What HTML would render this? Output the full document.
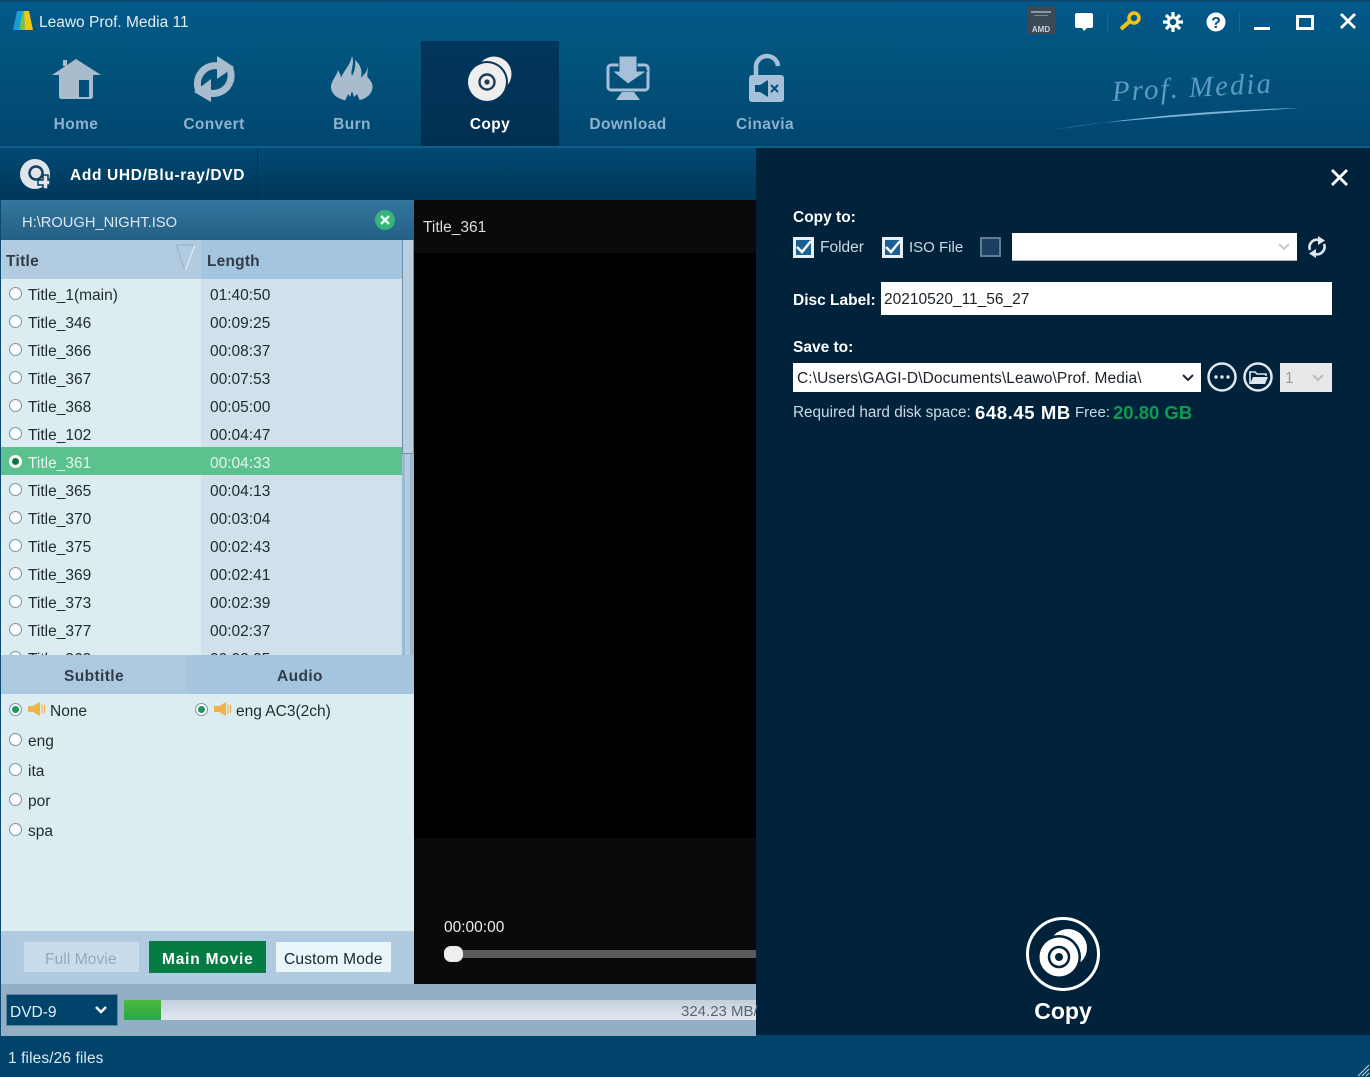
<!DOCTYPE html>
<html><head><meta charset="utf-8"><title>Leawo Prof. Media 11</title>
<style>
html,body{margin:0;padding:0;background:#00436b}
#r{position:relative;width:1370px;height:1077px;overflow:hidden;font-family:"Liberation Sans",sans-serif;font-size:15.5px;color:#222b33}
#r div,#r span.t{position:absolute}
.t{white-space:nowrap;line-height:20px;margin-top:-8px}
.nav{width:138px;text-align:center;font-weight:bold;font-size:15.5px;color:#8fb1cd;top:123px;letter-spacing:.4px;margin-top:-8px}
.rd{width:11px;height:11px;border-radius:50%;background:radial-gradient(circle at 50% 60%,#fff 40%,#e6eef3);border:1px solid #7d93a6}
.ws{color:#fff}
svg{position:absolute;left:0;top:0}
</style></head><body><div id="r">
<div style="left:0;top:0;width:1370px;height:147px;background:linear-gradient(#02588a 0,#02567f 30%,#01466f 100%)"></div>
<div style="left:0;top:0;width:1370px;height:2px;background:#0a4a72"></div>
<div style="left:421px;top:41px;width:138px;height:105px;background:linear-gradient(#03365c,#012f50)"></div>
<div style="left:0;top:146px;width:1370px;height:2px;background:#0d5f88"></div>
<div style="left:0;top:148px;width:756px;height:52px;background:linear-gradient(#014a73,#01375a)"></div>
<div style="left:257px;top:148px;width:1px;height:52px;background:#013252"></div>
<div style="left:756px;top:148px;width:614px;height:888px;background:#00233b"></div>
<div style="left:0;top:1035px;width:1370px;height:42px;background:#00436b"></div>

<!-- left panel -->
<div style="left:0;top:200px;width:414px;height:40px;background:linear-gradient(#33769e,#255f85)"></div>
<div style="left:1px;top:240px;width:200px;height:39px;background:#b1cbe0"></div>
<div style="left:201px;top:240px;width:201px;height:39px;background:#a3c5df"></div>
<div style="left:1px;top:279px;width:200px;height:376px;background:#dcedf1"></div>
<div style="left:201px;top:279px;width:201px;height:376px;background:#d0e1eb"></div>
<div style="left:1px;top:447px;width:401px;height:28px;background:#5bc18f"></div>
<div style="left:402px;top:240px;width:12px;height:415px;background:#9db8d1"></div>
<div style="left:405px;top:454px;width:5px;height:201px;background:#b4cce0"></div>
<div style="left:402px;top:240px;width:10px;height:213px;background:#b8cfe1;border:solid #7690a8;border-width:0 1px 1px 1px"></div>

<div style="left:0;top:655px;width:187px;height:39px;background:#acc9e0"></div>
<div style="left:187px;top:655px;width:227px;height:39px;background:#a3c5de"></div>
<div style="left:1px;top:694px;width:413px;height:237px;background:#dcedf1"></div>
<div style="left:1px;top:931px;width:413px;height:53px;background:#b0cbe0"></div>
<div style="left:1px;top:984px;width:755px;height:52px;background:#92afc5"></div>
<div style="left:0;top:200px;width:1px;height:835px;background:#0a4a70"></div>

<div style="left:23px;top:941px;width:115px;height:30px;background:#c8dcec;border:1px solid #b4cbe0"></div>
<div style="left:149px;top:941px;width:117px;height:32px;background:#067c42"></div>
<div style="left:276px;top:942px;width:115px;height:30px;background:#e8f6fb"></div>

<div style="left:6px;top:994px;width:110px;height:30px;background:#00436b;border:1px solid #5f829f"></div>
<div style="left:124px;top:1000px;width:632px;height:20px;background:linear-gradient(#c4cfdb,#e2e8ef)"></div>
<div style="left:124px;top:1000px;width:37px;height:20px;background:linear-gradient(#4bbb3a,#26a84a)"></div>

<!-- video -->
<div style="left:414px;top:200px;width:342px;height:53px;background:#0a0a0a"></div>
<div style="left:414px;top:253px;width:342px;height:585px;background:#000"></div>
<div style="left:414px;top:838px;width:342px;height:146px;background:#0a0a0a"></div>
<div style="left:444px;top:950px;width:312px;height:8px;background:#5a5a5a"></div>
<div style="left:444px;top:946px;width:19px;height:16px;border-radius:7px;background:#eee"></div>

<!-- radios list -->
<div class="rd" style="left:9px;top:287px"></div>
<div class="rd" style="left:9px;top:315px"></div>
<div class="rd" style="left:9px;top:343px"></div>
<div class="rd" style="left:9px;top:371px"></div>
<div class="rd" style="left:9px;top:399px"></div>
<div class="rd" style="left:9px;top:427px"></div>
<div class="rd" style="left:9px;top:455px;border-color:#fff;background:#fff"></div>
<div style="left:12px;top:458px;width:7px;height:7px;border-radius:50%;background:#067c42"></div>
<div class="rd" style="left:9px;top:483px"></div>
<div class="rd" style="left:9px;top:511px"></div>
<div class="rd" style="left:9px;top:539px"></div>
<div class="rd" style="left:9px;top:567px"></div>
<div class="rd" style="left:9px;top:595px"></div>
<div class="rd" style="left:9px;top:623px"></div>

<!-- table text -->
<span class="t" style="left:28px;top:294px">Title_1(main)</span><span class="t" style="left:210px;top:294px">01:40:50</span>
<span class="t" style="left:28px;top:322px">Title_346</span><span class="t" style="left:210px;top:322px">00:09:25</span>
<span class="t" style="left:28px;top:350px">Title_366</span><span class="t" style="left:210px;top:350px">00:08:37</span>
<span class="t" style="left:28px;top:378px">Title_367</span><span class="t" style="left:210px;top:378px">00:07:53</span>
<span class="t" style="left:28px;top:406px">Title_368</span><span class="t" style="left:210px;top:406px">00:05:00</span>
<span class="t" style="left:28px;top:434px">Title_102</span><span class="t" style="left:210px;top:434px">00:04:47</span>
<span class="t" style="left:28px;top:462px;color:#e4f5ee">Title_361</span><span class="t" style="left:210px;top:462px;color:#e4f5ee">00:04:33</span>
<span class="t" style="left:28px;top:490px">Title_365</span><span class="t" style="left:210px;top:490px">00:04:13</span>
<span class="t" style="left:28px;top:518px">Title_370</span><span class="t" style="left:210px;top:518px">00:03:04</span>
<span class="t" style="left:28px;top:546px">Title_375</span><span class="t" style="left:210px;top:546px">00:02:43</span>
<span class="t" style="left:28px;top:574px">Title_369</span><span class="t" style="left:210px;top:574px">00:02:41</span>
<span class="t" style="left:28px;top:602px">Title_373</span><span class="t" style="left:210px;top:602px">00:02:39</span>
<span class="t" style="left:28px;top:630px">Title_377</span><span class="t" style="left:210px;top:630px">00:02:37</span>
<div style="left:0;top:648px;width:402px;height:7px;overflow:hidden">
<div class="rd" style="left:9px;top:3px"></div>
<span class="t" style="left:28px;top:10px">Title_363</span><span class="t" style="left:210px;top:10px">00:02:35</span></div>

<span class="t" style="left:22px;top:221px;color:#dce8f0;font-size:14.7px">H:\ROUGH_NIGHT.ISO</span>
<span class="t" style="left:6px;top:260px;font-weight:bold;color:#333c46;font-size:15.5px;letter-spacing:.3px">Title</span>
<span class="t" style="left:207px;top:260px;font-weight:bold;color:#333c46;font-size:15.5px;letter-spacing:.2px">Length</span>
<span class="t" style="left:64px;top:675px;font-weight:bold;color:#333c46;font-size:15.5px;letter-spacing:.4px">Subtitle</span>
<span class="t" style="left:277px;top:675px;font-weight:bold;color:#333c46;font-size:15.5px;letter-spacing:.4px">Audio</span>

<div class="rd" style="left:9px;top:703px"></div>
<div style="left:12px;top:706px;width:7px;height:7px;border-radius:50%;background:#1a9a58"></div>
<div class="rd" style="left:195px;top:703px"></div>
<div style="left:198px;top:706px;width:7px;height:7px;border-radius:50%;background:#1a9a58"></div>
<div class="rd" style="left:9px;top:733px"></div>
<div class="rd" style="left:9px;top:763px"></div>
<div class="rd" style="left:9px;top:793px"></div>
<div class="rd" style="left:9px;top:823px"></div>
<span class="t" style="left:50px;top:710px">None</span>
<span class="t" style="left:236px;top:710px">eng AC3(2ch)</span>
<span class="t" style="left:28px;top:740px">eng</span>
<span class="t" style="left:28px;top:770px">ita</span>
<span class="t" style="left:28px;top:800px">por</span>
<span class="t" style="left:28px;top:830px">spa</span>

<span class="t" style="left:45px;top:958px;color:#97a9b7;letter-spacing:.1px">Full Movie</span>
<span class="t" style="left:162px;top:958px;color:#fff;font-weight:bold;font-size:15.5px;letter-spacing:.8px">Main Movie</span>
<span class="t" style="left:284px;top:958px;color:#1c2228;letter-spacing:.2px">Custom Mode</span>
<span class="t" style="left:10px;top:1011px;color:#e6eef4">DVD-9</span>
<span class="t" style="left:681px;top:1010px;color:#5a6772;font-size:15px">324.23 MB/</span>
<span class="t" style="left:8px;top:1057px;color:#e0e8ef;letter-spacing:.1px">1 files/26 files</span>
<span class="t" style="left:423px;top:226px;color:#ddd">Title_361</span>
<span class="t" style="left:444px;top:926px;color:#eee">00:00:00</span>

<!-- top text -->
<span class="t" style="left:39px;top:21px;color:#e4edf3;font-size:15.5px">Leawo Prof. Media 11</span>
<div class="nav t" style="left:7px">Home</div>
<div class="nav t" style="left:145px">Convert</div>
<div class="nav t" style="left:283px">Burn</div>
<div class="nav t" style="left:421px;color:#fff">Copy</div>
<div class="nav t" style="left:559px">Download</div>
<div class="nav t" style="left:696px">Cinavia</div>
<span class="t" style="left:70px;top:174px;color:#fff;font-weight:bold;font-size:15.5px;letter-spacing:.65px">Add UHD/Blu-ray/DVD</span>
<span class="t" style="left:1112px;top:90px;color:#5c9bc2;font-family:'Liberation Serif',serif;font-style:italic;font-size:29px;letter-spacing:2px;transform:rotate(-3deg);transform-origin:left center">Prof. Media</span>

<!-- right panel -->
<span class="t ws" style="left:793px;top:216px;font-weight:bold;font-size:15.5px">Copy to:</span>
<span class="t" style="left:820px;top:246px;color:#ccd9e4">Folder</span>
<span class="t" style="left:909px;top:246px;color:#ccd9e4;font-size:15px">ISO File</span>
<div style="left:793px;top:237px;width:15px;height:15px;background:#1c5f92;border:3px solid #e8f0f5"></div>
<div style="left:882px;top:237px;width:15px;height:15px;background:#1c5f92;border:3px solid #e8f0f5"></div>
<div style="left:980px;top:237px;width:17px;height:16px;background:#1a3f5f;border:2px solid #5f7d96"></div>
<div style="left:1012px;top:233px;width:285px;height:27px;background:#fff;border-bottom:1px solid #aab"></div>
<span class="t ws" style="left:793px;top:299px;font-weight:bold;font-size:15.5px">Disc Label:</span>
<div style="left:881px;top:282px;width:451px;height:33px;background:#fff"></div>
<span class="t" style="left:884px;top:298px;color:#1c2228">20210520_11_56_27</span>
<span class="t ws" style="left:793px;top:346px;font-weight:bold;font-size:15.5px">Save to:</span>
<div style="left:793px;top:363px;width:408px;height:29px;background:#fff"></div>
<span class="t" style="left:797px;top:377px;color:#1c2228;letter-spacing:.1px">C:\Users\GAGI-D\Documents\Leawo\Prof. Media\</span>
<div style="left:1280px;top:363px;width:52px;height:29px;background:#e8e8e8"></div>
<span class="t" style="left:1285px;top:377px;color:#999">1</span>
<span class="t" style="left:793px;top:411px;color:#ccd9e4;font-size:15.3px">Required hard disk space:</span>
<span class="t ws" style="left:975px;top:411px;font-weight:bold;font-size:18.5px;letter-spacing:.6px">648.45 MB</span>
<span class="t" style="left:1075px;top:411px;color:#ccd9e4;font-size:15px">Free:</span>
<span class="t" style="left:1113px;top:411px;font-weight:bold;font-size:18.5px;color:#0d9a55">20.80 GB</span>
<div class="t ws" style="left:963px;top:1011px;width:200px;text-align:center;font-weight:bold;font-size:23px;line-height:24px;margin-top:-12px">Copy</div>

<svg width="1370" height="1077" viewBox="0 0 1370 1077">
<!-- logo -->
<path d="M13 30 L17 11 H22 L19 30Z" fill="#1b9bd8"/><path d="M19 30 L22 11 H26 L25 30Z" fill="#36c0a0"/><path d="M25 30 L24 11 H29 L33 30Z" fill="#f4c519"/>
<path d="M20 30 L23 13 L25 30Z" fill="#7ac143"/>
<!-- home -->
<g fill="#a8bccd"><path d="M76 59 L101 75 H52Z M63 60 H67 V66 H63Z"/><path d="M59 72 H93 V96 Q93 99 90 99 H62 Q59 99 59 96Z"/></g>
<path d="M79 80 H89 V97 H79Z" fill="#02507a"/>
<!-- convert -->
<g fill="none" stroke="#a8bccd" stroke-width="7"><path d="M199 91 A18 18 0 0 1 219 66"/><path d="M229 67 A18 18 0 0 1 209 93"/></g>
<path d="M217 56 L234 67 L217 79Z M211 79 L194 92 L211 102Z" fill="#a8bccd"/>
<!-- burn -->
<path d="M352 56 C355 64 350 70 352 76 C354 72 356 68 355 60 C362 66 362 72 361 78 C364 74 368 72 367 66 C369 72 366 74 368 78 C371 80 374 86 372 90 C370 97 362 101 352 101 C341 101 332 96 331 88 C331 80 337 76 338 70 C340 74 341 76 341 78 C344 70 350 66 352 56Z" fill="#a8bccd"/>
<path d="M345 101 L348 94 L350 97 L352 91 L354 97 L357 94 L360 101Z" fill="#02507a"/>
<path d="M362 60 C366 63 366 67 363 70 M369 64 C371 67 371 70 369 72" stroke="#02507a" stroke-width="1.5" fill="none"/>
<!-- copy nav -->
<circle cx="494" cy="74" r="17.5" fill="#eee"/><circle cx="487" cy="82" r="21" fill="#03365c"/>
<circle cx="487" cy="82" r="19" fill="#eee"/><circle cx="487" cy="82" r="7.5" fill="none" stroke="#1f3d55" stroke-width="2.4"/><circle cx="487" cy="82" r="2.6" fill="#1f3d55"/>
<!-- download -->
<rect x="608" y="65" width="40" height="25" rx="3" fill="none" stroke="#a5c0d8" stroke-width="3"/>
<path d="M619 56 H637 V71 H647 L628 84 L612 71 H619Z" fill="#a5c0d8" stroke="#02507a" stroke-width="1"/>
<path d="M622 92 H634 L640 100 H616Z" fill="#a5c0d8"/>
<!-- cinavia -->
<path d="M756 76 V68 A11 11 0 0 1 778 66" fill="none" stroke="#a5c0d8" stroke-width="4.5"/>
<rect x="749" y="75" width="35" height="27" rx="3" fill="#a5c0d8"/>
<path d="M755 85 H760 L768 80 V97 L760 92 H755Z" fill="#02507a"/>
<path d="M771 85 L778 92 M778 85 L771 92" stroke="#02507a" stroke-width="2"/>
<!-- add disc -->
<circle cx="35" cy="174" r="15" fill="#dfe5ea"/><circle cx="36" cy="173" r="6.5" fill="none" stroke="#14405f" stroke-width="2.5"/>
<path d="M38 180 H43 V175 H48 V180 H50 V185 H48 V189 H43 V185 H38Z" fill="#dfe5ea" stroke="#013f65" stroke-width="1.5"/>
<!-- window controls -->
<rect x="1027" y="6" width="28" height="28" rx="2" fill="#3c4a57"/><rect x="1031" y="11" width="20" height="2" fill="#8a97a4"/><rect x="1034" y="15" width="14" height="1" fill="#7a8794"/>
<text x="1041" y="32" font-family="Liberation Sans" font-weight="bold" font-size="8" fill="#ccd3da" text-anchor="middle">AMD</text>
<path d="M1077 13 H1091 Q1093 13 1093 15 V26 Q1093 28 1091 28 H1087 L1084 31 L1082 28 H1077 Q1075 28 1075 26 V15 Q1075 13 1077 13Z" fill="#fff"/>
<rect x="1107" y="12" width="1" height="20" fill="#0c6a95"/><rect x="1239" y="12" width="1" height="20" fill="#0c6a95"/>
<circle cx="1134" cy="18" r="5" fill="none" stroke="#f2c313" stroke-width="3.5"/><path d="M1130 21 L1121 29" stroke="#f2c313" stroke-width="4"/>
<g transform="translate(1173 22)"><circle r="6" fill="#fff"/><path d="M0 -10V10M-10 0H10M-7 -7L7 7M-7 7L7 -7" stroke="#fff" stroke-width="3.2"/><circle r="3.2" fill="#02527c"/></g>
<circle cx="1216" cy="22" r="9.5" fill="#fff"/><text x="1216" y="28" font-family="Liberation Sans" font-weight="bold" font-size="16" fill="#024f79" text-anchor="middle">?</text>
<rect x="1254" y="27" width="16" height="3" fill="#fff"/>
<rect x="1297.500" y="16.500" width="15" height="12" fill="none" stroke="#fff" stroke-width="3"/>
<path d="M1341 14 L1355 28 M1355 14 L1341 28" stroke="#fff" stroke-width="2.800"/>
<!-- left X -->
<circle cx="385" cy="220" r="10" fill="#35b57a"/><path d="M381 216 L389 224 M389 216 L381 224" stroke="#e8f8f0" stroke-width="2.500"/>
<path d="M176 245 H195 L185 271Z" fill="none" stroke="#98b2c6" stroke-width="1"/><path d="M195 245 L185 271" stroke="#f0f6fa" stroke-width="1"/>
<!-- speakers -->
<path d="M28 706 H33 L40 702 V716 L33 712 H28Z" fill="#f0b24a"/><path d="M42 704 V714 M44.500 705 V713" stroke="#e6a93c" stroke-width="1"/>
<path d="M214 706 H219 L226 702 V716 L219 712 H214Z" fill="#f0b24a"/><path d="M228 704 V714 M230.500 705 V713" stroke="#e6a93c" stroke-width="1"/>
<!-- chevrons -->
<path d="M96 1007 L101 1012 L106 1007" fill="none" stroke="#fff" stroke-width="2.500"/>
<path d="M1279 244 L1284 249 L1289 244" fill="none" stroke="#c0c6cc" stroke-width="1.800"/>
<path d="M1183 375 L1188 380 L1193 375" fill="none" stroke="#223" stroke-width="2"/>
<path d="M1313 375 L1318 380 L1323 375" fill="none" stroke="#bbb" stroke-width="2"/>
<!-- checks -->
<path d="M797 247 L802 252 L811 241" fill="none" stroke="#fff" stroke-width="2.500"/>
<path d="M886 247 L891 252 L900 241" fill="none" stroke="#fff" stroke-width="2.500"/>
<!-- refresh -->
<g fill="none" stroke="#dfe7ee" stroke-width="2.600"><path d="M1310 250 A7.500 7.500 0 0 1 1319 240"/><path d="M1324 244 A7.500 7.500 0 0 1 1315 254"/></g>
<path d="M1318 236 L1325 240.500 L1318 245Z M1316 249 L1309 253.500 L1316 258Z" fill="#dfe7ee"/>
<!-- circle btns -->
<circle cx="1222" cy="377" r="13.500" fill="none" stroke="#dfe7ee" stroke-width="2.500"/>
<circle cx="1216" cy="377" r="1.700" fill="#dfe7ee"/><circle cx="1222" cy="377" r="1.700" fill="#dfe7ee"/><circle cx="1228" cy="377" r="1.700" fill="#dfe7ee"/>
<circle cx="1258" cy="377" r="13.500" fill="none" stroke="#dfe7ee" stroke-width="2.500"/>
<path d="M1250 384 V372 H1255 L1257 374 H1266 V376" fill="none" stroke="#dfe7ee" stroke-width="1.600"/><path d="M1250 384 L1253 377 H1268 L1265 384Z" fill="#dfe7ee"/>
<!-- panel close -->
<path d="M1332 170 L1347 185 M1347 170 L1332 185" stroke="#fff" stroke-width="2.800"/>
<!-- big copy -->
<circle cx="1063" cy="954" r="35.500" fill="none" stroke="#fff" stroke-width="3"/>
<circle cx="1068" cy="948" r="19" fill="#fff"/><circle cx="1059" cy="957" r="22" fill="#00233b"/>
<circle cx="1059" cy="957" r="19.500" fill="#fff"/><circle cx="1059" cy="957" r="10" fill="none" stroke="#00233b" stroke-width="2.500"/><circle cx="1059" cy="957" r="4" fill="#00233b"/>
<!-- prof media swoosh -->
<path d="M1053 130 Q1170 111 1300 108 Q1190 115 1100 123 Q1075 126 1053 130Z" fill="#78b4d8"/>
<!-- grip -->
<path d="M1358 1076 L1369 1065 M1362 1076 L1369 1069 M1366 1076 L1369 1073" stroke="#c9d8e2" stroke-width="1"/>
</svg>
</div></body></html>
